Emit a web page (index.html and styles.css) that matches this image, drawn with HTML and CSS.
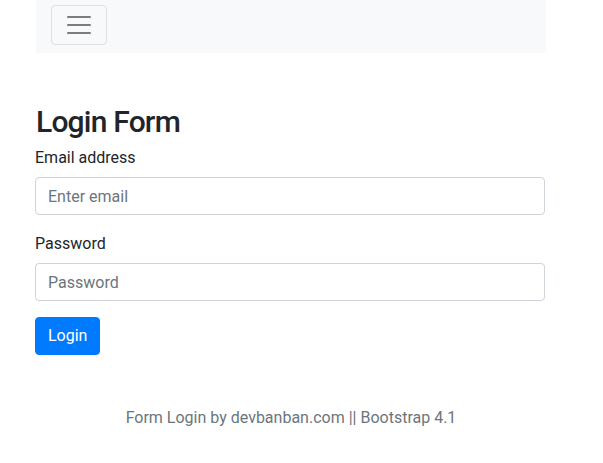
FILE: index.html
```html
<!DOCTYPE html>
<html lang="en">
<head>
<meta charset="utf-8">
<title>Login Form</title>
<link rel="stylesheet" href="styles.css">
</head>
<body>
<div class="container">
  <nav class="navbar">
    <button class="toggler" type="button" aria-label="Toggle navigation">
      <svg class="toggler-icon" viewBox="0 0 30 30" width="30" height="30" aria-hidden="true">
        <path d="M4 7h22M4 15h22M4 23h22" stroke="rgba(0,0,0,0.5)" stroke-width="2" stroke-linecap="round" stroke-miterlimit="10" fill="none"/>
      </svg>
    </button>
  </nav>

  <h2 class="title">Login Form</h2>
  <form class="form">
    <div class="form-group">
      <label class="label" for="email">Email address</label>
      <input class="control" id="email" type="email" placeholder="Enter email">
    </div>
    <div class="form-group">
      <label class="label" for="pwd">Password</label>
      <input class="control" id="pwd" type="password" placeholder="Password">
    </div>
    <button class="btn" type="submit">Login</button>
  </form>

  <p class="footer">Form Login by devbanban.com || Bootstrap 4.1</p>
</div>
</body>
</html>
```
FILE: styles.css
```css
*,
*::before,
*::after {
  box-sizing: border-box;
}

body {
  margin: 0;
  font-family: Roboto, "Liberation Sans", sans-serif;
  font-size: 16px;
  line-height: 1.5;
  color: #212529;
  background: #fff;
}

.container {
  width: 510px;
  margin-left: 36px;
}

.navbar {
  display: flex;
  align-items: center;
  background: #f8f9fa;
  padding: 5px 16px 8px 15px;
}

.toggler {
  display: flex;
  align-items: center;
  justify-content: center;
  width: 56px;
  height: 40px;
  padding: 4px 12px;
  background: transparent;
  border: 1px solid rgba(0, 0, 0, 0.1);
  border-radius: 4px;
  cursor: pointer;
}

.toggler-icon {
  display: block;
  width: 30px;
  height: 30px;
}

.title {
  margin: 51px 0 5px;
  font-size: 30px;
  font-weight: 500;
  line-height: 1.2;
  letter-spacing: -0.8px;
}

.form {
  margin: 0;
}

.form-group {
  margin-bottom: 16px;
}

.label {
  display: block;
  padding-top: 1px;
  margin-bottom: 7px;
  margin-left: -1px;
}

.control {
  display: block;
  width: 510px;
  height: 38px;
  margin-left: -1px;
  padding: 6px 12px;
  font-family: inherit;
  font-size: 16px;
  line-height: 1.5;
  color: #495057;
  background: #fff;
  border: 1px solid #ced4da;
  border-radius: 4px;
}

.control::placeholder {
  color: #6c757d;
  opacity: 1;
}

.btn {
  display: inline-block;
  margin-left: -1px;
  padding: 6px 12px;
  font-family: inherit;
  font-size: 16px;
  line-height: 1.5;
  color: #fff;
  background: #007bff;
  border: 1px solid #007bff;
  border-radius: 4px;
  cursor: pointer;
}

.footer {
  margin: 51px 0 0;
  text-align: center;
  color: #6c757d;
}
```
